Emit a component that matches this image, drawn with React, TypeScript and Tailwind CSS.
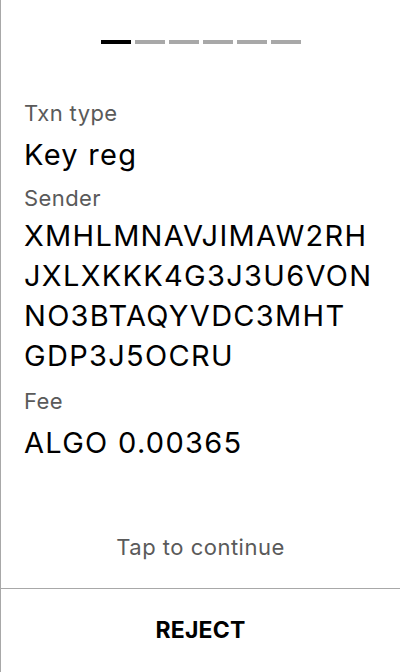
import React from "react";

const steps = [true, false, false, false, false, false];

function Field({
  label,
  children,
  labelClass,
  valueClass,
}: {
  label: string;
  children: React.ReactNode;
  labelClass: string;
  valueClass: string;
}) {
  return (
    <div>
      <div className={`text-[22px] leading-[28px] tracking-[0.4px] text-[#5a5a5a] ${labelClass}`}>
        {label}
      </div>
      <div className={`text-[29px] leading-[40px] tracking-[1.3px] text-black ${valueClass}`}>
        {children}
      </div>
    </div>
  );
}

export default function App() {
  return (
    <div
      className="h-screen w-full bg-white border-l border-[#a8a8a8] flex flex-col"
      style={{ fontFamily: "Inter, 'Noto Sans', sans-serif" }}
    >
      {/* Progress */}
      <div className="flex justify-center gap-[4px] pt-[40px]">
        {steps.map((active, i) => (
          <div
            key={i}
            className={`w-[30px] h-[4px] ${active ? "bg-black" : "bg-[#a8a8a8]"}`}
          />
        ))}
      </div>

      {/* Details */}
      <div className="px-[23px] pt-[55px]">
        <Field label="Txn type" labelClass="" valueClass="mt-[8px]">
          Key reg
        </Field>
        <Field label="Sender" labelClass="mt-[9px]" valueClass="mt-[4px] break-all">
          <div>XMHLMNAVJIMAW2RH</div>
          <div>JXLXKKK4G3J3U6VON</div>
          <div>NO3BTAQYVDC3MHT</div>
          <div>GDP3J5OCRU</div>
        </Field>
        <Field label="Fee" labelClass="mt-[11px]" valueClass="mt-[8px]">
          ALGO 0.00365
        </Field>
      </div>

      <div className="flex-1" />

      <div className="text-center text-[22px] leading-[28px] tracking-[0.5px] text-[#5a5a5a] mb-[27px]">
        Tap to continue
      </div>

      <div className="border-t border-[#a8a8a8]" />

      <button className="h-[83px] w-full flex items-center justify-center text-[23px] font-bold text-black tracking-[0.2px]">
        REJECT
      </button>
    </div>
  );
}
